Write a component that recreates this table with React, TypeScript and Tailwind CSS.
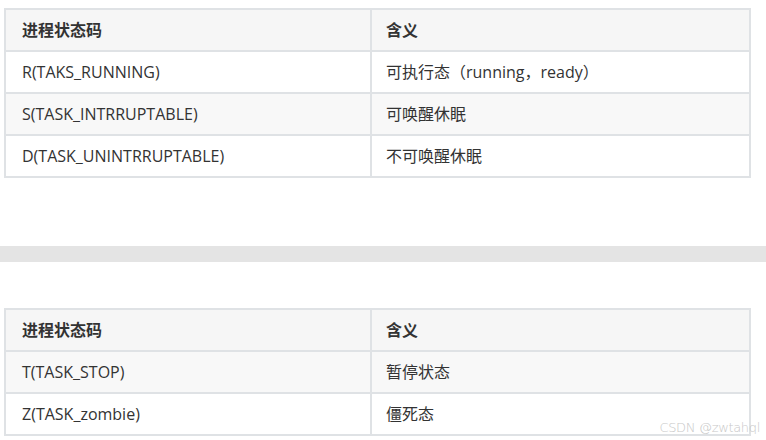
import React from 'react';

type Row = { code: string; meaning: string; shaded?: boolean };

const tableA: Row[] = [
  { code: 'R(TAKS_RUNNING)', meaning: '可执行态（running，ready）' },
  { code: 'S(TASK_INTRRUPTABLE)', meaning: '可唤醒休眠', shaded: true },
  { code: 'D(TASK_UNINTRRUPTABLE)', meaning: '不可唤醒休眠' },
];

const tableB: Row[] = [
  { code: 'T(TASK_STOP)', meaning: '暂停状态', shaded: true },
  { code: 'Z(TASK_zombie)', meaning: '僵死态' },
];

const font = { fontFamily: '"Open Sans", "Noto Sans CJK SC", sans-serif' };

const StateTable: React.FC<{ rows: Row[] }> = ({ rows }) => (
  <div className="ml-[4px] w-[747px] border-l-2 border-t-2 border-[#dfe2e5] text-[16px] text-[#333]">
    <div className="grid grid-cols-[366px_1fr] bg-[#f6f6f6] font-bold">
      <div className="h-[42px] flex items-center pl-[16px] border-r-2 border-b-2 border-[#dfe2e5]">进程状态码</div>
      <div className="h-[42px] flex items-center pl-[14px] border-r-2 border-b-2 border-[#dfe2e5]">含义</div>
    </div>
    {rows.map((r) => (
      <div key={r.code} className={`grid grid-cols-[366px_1fr] ${r.shaded ? 'bg-[#f8f8f8]' : 'bg-white'}`}>
        <div className="h-[42px] flex items-center pl-[16px] border-r-2 border-b-2 border-[#dfe2e5]">{r.code}</div>
        <div className="h-[42px] flex items-center pl-[14px] border-r-2 border-b-2 border-[#dfe2e5]">{r.meaning}</div>
      </div>
    ))}
  </div>
);

export default function App() {
  return (
    <div className="relative w-[766px] h-[440px] bg-white overflow-hidden" style={font}>
      <div className="pt-[8px]">
        <StateTable rows={tableA} />
      </div>
      <div className="mt-[68px] h-[16px] bg-[#e4e4e4]" />
      <div className="pt-[46px]">
        <StateTable rows={tableB} />
      </div>
      <div className="absolute right-[6px] bottom-[6px] text-[13px] leading-none text-[#c8c8c8] font-light tracking-tight" style={{ fontFamily: '"DejaVu Sans", sans-serif' }}>
        CSDN @zwtahql
      </div>
    </div>
  );
}
